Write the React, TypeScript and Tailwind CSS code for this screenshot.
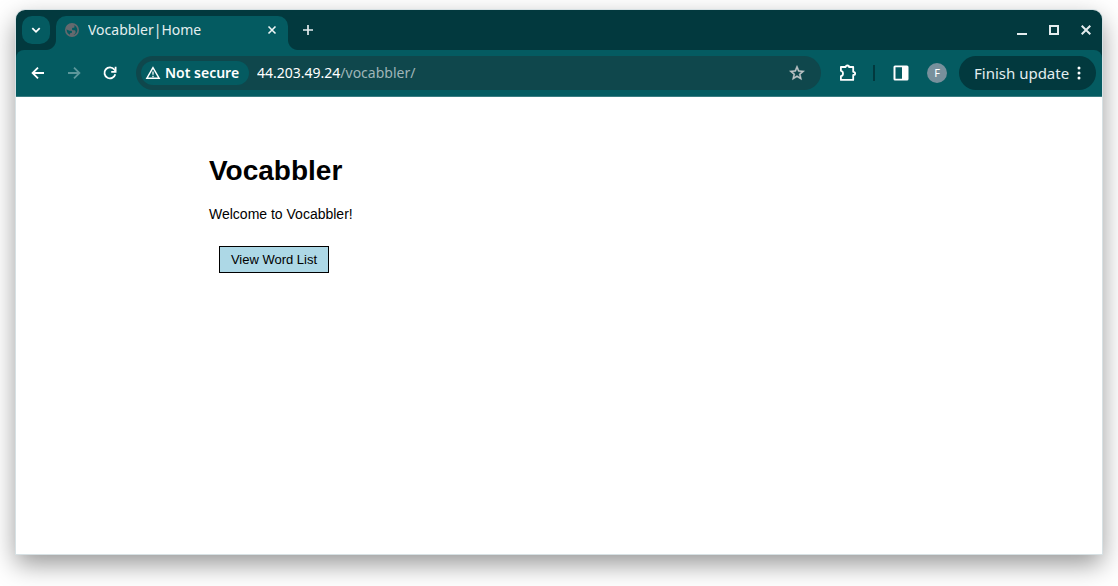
import React from "react";

function WindowButton({ label, children }: { label: string; children: React.ReactNode }) {
  return (
    <button type="button" aria-label={label} className="flex size-6 items-center justify-center text-[#e4ecee]">
      {children}
    </button>
  );
}

function ToolButton({
  label,
  disabled,
  children,
}: {
  label: string;
  disabled?: boolean;
  children: React.ReactNode;
}) {
  return (
    <button
      type="button"
      aria-label={label}
      disabled={disabled}
      className="flex size-7 shrink-0 items-center justify-center rounded-full text-white disabled:text-[#5c979b]"
    >
      {children}
    </button>
  );
}

function TabStrip() {
  return (
    <div className="flex h-10 items-end bg-[#02393e] pl-[6px]">
      <button
        type="button"
        aria-label="Search tabs"
        className="mb-[6px] flex size-7 shrink-0 items-center justify-center rounded-[10px] bg-[#045b61] text-white"
      >
        <svg width="10" height="10" viewBox="0 0 10 10" fill="none" stroke="currentColor" strokeWidth="1.8">
          <path d="M1.3 3.2 5 6.8l3.7-3.6" />
        </svg>
      </button>
      <div className="relative ml-[6px] flex h-[34px] w-[232px] items-center rounded-t-[10px] bg-[#045b61] pr-2 pb-[6px] pl-2">
        <span className="absolute bottom-0 -left-[10px] size-[10px] bg-[radial-gradient(circle_at_0_0,transparent_9.5px,#045b61_10.5px)]" />
        <span className="absolute -right-[10px] bottom-0 size-[10px] bg-[radial-gradient(circle_at_100%_0,transparent_9.5px,#045b61_10.5px)]" />
        <svg width="16" height="16" viewBox="0 0 24 24" fill="#65696e" className="shrink-0">
          <path d="M12 1.5a10.5 10.5 0 1 0 0 21 10.5 10.5 0 0 0 0-21ZM4 12c0-.4 0-.8.1-1.2 1.600 1.500 3.300 2.200 5.900 2.200 1.600 0 2 .7 2 2s-.5 1.600-1.600 1.600c-1 0-1.400.6-1.400 1.700v1C6.200 18.100 4 15.300 4 12Zm10.500 7.600c.1-1.200.9-1.600 1.900-2.100 1-.5 1-1.600 1-2.700 0-1.800-1.200-2.300-2.900-2.300-1.700 0-2.500-.8-2.500-2 0-1.300.8-1.800 2-1.800 1.300 0 1.800-.7 1.800-1.700 0-.9-.4-1.500-1.300-2.300C17.800 5.300 20 8.400 20 12c0 3.500-2.300 6.500-5.500 7.600Z" />
        </svg>
        <span className="ml-2 flex-1 truncate text-[14px] leading-5 text-[#e3eeef]">Vocabbler|Home</span>
        <button type="button" aria-label="Close tab" className="flex size-4 items-center justify-center text-[#eef5f5]">
          <svg width="10" height="10" viewBox="0 0 10 10" stroke="currentColor" strokeWidth="1.6">
            <path d="m1.500 1.500 7 7m0-7-7 7" />
          </svg>
        </button>
      </div>
      <button
        type="button"
        aria-label="New tab"
        className="mb-[6px] ml-[6px] flex size-7 items-center justify-center text-[#e4ecee]"
      >
        <svg width="10" height="10" viewBox="0 0 10 10" stroke="currentColor" strokeWidth="1.700">
          <path d="M5 0v10M0 5h10" />
        </svg>
      </button>
      <div className="mb-2 ml-auto flex gap-2 pr-1">
        <WindowButton label="Minimize">
          <svg width="10" height="10" viewBox="0 0 10 10" fill="currentColor">
            <path d="M0 8h10v2H0z" />
          </svg>
        </WindowButton>
        <WindowButton label="Maximize">
          <svg width="10" height="10" viewBox="0 0 10 10" fill="none" stroke="currentColor" strokeWidth="2">
            <path d="M1 1h8v8H1z" />
          </svg>
        </WindowButton>
        <WindowButton label="Close">
          <svg width="10" height="10" viewBox="0 0 10 10" stroke="currentColor" strokeWidth="2">
            <path d="m.7.7 8.600 8.600m0-8.600L.7 9.300" />
          </svg>
        </WindowButton>
      </div>
    </div>
  );
}

function AddressBar() {
  return (
    <div className="ml-1 flex h-[34px] min-w-0 flex-1 items-center rounded-full bg-[#0f474c] pr-[10px] pl-[5px]">
      <button
        type="button"
        className="flex h-6 w-[108px] shrink-0 items-center gap-1 rounded-full bg-[#045b61] pl-1 text-white"
      >
        <svg width="16" height="16" viewBox="0 0 16 16" fill="none" stroke="currentColor" strokeWidth="1.500" className="shrink-0">
          <path d="M8 2.700 1.900 13.200h12.200Z" />
          <path d="M8 6.500v3.300M8 10.700v1.500" strokeWidth="1.300" />
        </svg>
        <span className="text-[14px] leading-5 font-semibold whitespace-nowrap">Not secure</span>
      </button>
      <div className="ml-2 flex-1 truncate text-[14px] leading-5 text-[#9fb5b8]">
        <span className="text-white">44.203.49.24</span>/vocabbler/
      </div>
      <button type="button" aria-label="Bookmark this tab" className="flex size-7 items-center justify-center text-[#bfc5c7]">
        <svg width="18" height="18" viewBox="0 0 24 24" fill="currentColor" stroke="currentColor" strokeWidth="0.600">
          <path d="m22 9.240-7.190-.62L12 2 9.190 8.630 2 9.240l5.460 4.730L5.820 21 12 17.270 18.180 21l-1.630-7.030L22 9.240ZM12 15.400l-3.760 2.270 1-4.280-3.320-2.880 4.380-.38L12 6.100l1.710 4.040 4.380.38-3.320 2.880 1 4.280L12 15.400Z" />
        </svg>
      </button>
    </div>
  );
}

function Toolbar() {
  return (
    <div className="bg-[#02393e]">
      <div className="flex h-[47px] items-center gap-2 rounded-t-lg border-b border-[#397c81] bg-[#045b61] pr-[6px] pl-2">
        <ToolButton label="Back">
          <svg width="14" height="14" viewBox="0 0 14 14" fill="none" stroke="currentColor" strokeWidth="1.800">
            <path d="M13 7H2M7 1.600 1.600 7 7 12.400" />
          </svg>
        </ToolButton>
        <ToolButton label="Forward" disabled>
          <svg width="14" height="14" viewBox="0 0 14 14" fill="none" stroke="currentColor" strokeWidth="1.800">
            <path d="M1 7h11M7 1.600 12.400 7 7 12.400" />
          </svg>
        </ToolButton>
        <ToolButton label="Reload">
          <svg width="14" height="14" viewBox="0 0 14 14" fill="none" stroke="currentColor" strokeWidth="1.800">
            <path d="M12.300 8.300A5.500 5.500 0 1 1 11.300 3.500L12.600 5" />
            <path d="M12.600.8v5H8.200" />
          </svg>
        </ToolButton>
        <AddressBar />
        <div className="ml-1 flex items-center">
          <ToolButton label="Extensions">
            <svg width="20" height="20" viewBox="0 0 20 20" fill="none" stroke="currentColor" strokeWidth="1.800" strokeLinejoin="round">
              <path d="M3.900 4H8.600C8.600 2 12 2 12 4H16.200V8.800C18.800 8.800 18.800 12 16.200 12V16.900H3.900V13.200C6.700 12.800 6.700 8.200 3.900 7.800Z" />
            </svg>
          </ToolButton>
          <span className="mx-3 h-4 w-[2px] bg-[#02393e]" />
          <ToolButton label="Side panel">
            <svg width="16" height="16" viewBox="0 0 16 16" fill="currentColor">
              <path fillRule="evenodd" d="M2 .5h12A1.500 1.500 0 0 1 15.500 2v12a1.500 1.500 0 0 1-1.500 1.500H2A1.500 1.500 0 0 1 .5 14V2A1.500 1.500 0 0 1 2 .5ZM2.500 2.300v11.400H9V2.300Z" />
            </svg>
          </ToolButton>
          <button
            type="button"
            aria-label="Profile"
            className="ml-3 flex size-5 items-center justify-center rounded-full bg-[#78909c] text-[11px] leading-4 text-white"
          >
            F
          </button>
        </div>
        <button
          type="button"
          className="ml-1 flex h-[34px] w-[137px] shrink-0 items-center rounded-full bg-[#02393e] pr-[15px] pl-[15px] text-[#e3eeef]"
        >
          <span className="text-[15px] leading-5 whitespace-nowrap">Finish update</span>
          <svg width="4" height="14" viewBox="0 0 4 14" fill="#ffffff" className="ml-auto">
            <circle cx="2" cy="2" r="1.500" />
            <circle cx="2" cy="7" r="1.500" />
            <circle cx="2" cy="12" r="1.500" />
          </svg>
        </button>
      </div>
    </div>
  );
}

function HomePage() {
  return (
    <main className="flex-1 bg-white px-4 pt-14 font-['Liberation_Sans',sans-serif] text-black">
      <div className="mx-auto max-w-[700px]">
        <h1 className="text-[28px] leading-9 font-bold">Vocabbler</h1>
        <p className="mt-[15px] text-[14px] leading-5">Welcome to Vocabbler!</p>
        <button
          type="button"
          className="mt-[22px] ml-[10px] h-[27px] w-[110px] border border-black bg-[#add8e6] text-[13px] leading-4"
        >
          View Word List
        </button>
      </div>
    </main>
  );
}

export default function App() {
  return (
    <div className="flex min-h-screen flex-col bg-white px-4 pt-[10px] pb-8 font-['Noto_Sans','Open_Sans',sans-serif]">
      <div className="flex flex-1 flex-col overflow-hidden rounded-t-[9px] shadow-[0_0_0_1px_#d7e1e4,0_10px_26px_rgba(0,0,0,0.42)]">
        <TabStrip />
        <Toolbar />
        <HomePage />
      </div>
    </div>
  );
}
